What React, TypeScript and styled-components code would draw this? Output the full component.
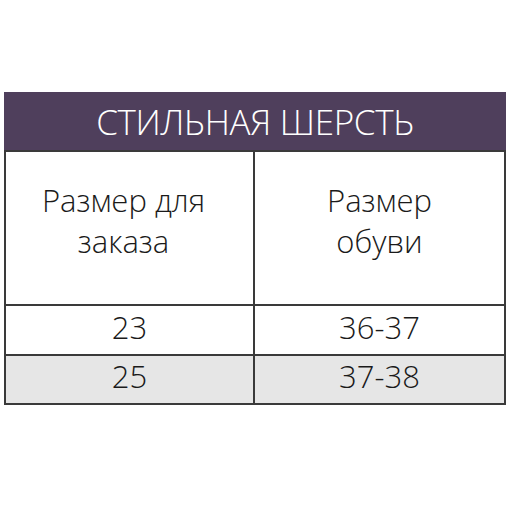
import React from "react";
import styled, { createGlobalStyle } from "styled-components";

const Global = createGlobalStyle`
  html, body {
    margin: 0;
    padding: 0;
    background: #ffffff;
  }
  body {
    font-family: "Open Sans", "Liberation Sans", sans-serif;
    color: #1a1a1a;
  }
`;

const Page = styled.div`
  width: 512px;
  height: 512px;
  padding: 92px 6px 0 4px;
  box-sizing: border-box;
`;

const Title = styled.div`
  height: 58px;
  background: #4f3f5c;
  color: #ffffff;
  display: flex;
  align-items: center;
  justify-content: center;
  font-size: 35px;
  font-weight: 300;
  letter-spacing: -0.3px;
`;

const Grid = styled.div`
  display: grid;
  grid-template-columns: 1fr 1fr;
  border: 2px solid #3a3a3a;
`;

const Cell = styled.div<{ $h: number; $shade?: boolean; $last?: boolean; $right?: boolean }>`
  height: ${(p) => p.$h}px;
  background: ${(p) => (p.$shade ? "#e6e6e6" : "#ffffff")};
  border-bottom: ${(p) => (p.$last ? "none" : "2px solid #3a3a3a")};
  border-right: ${(p) => (p.$right ? "none" : "2px solid #3a3a3a")};
  display: flex;
  align-items: center;
  justify-content: center;
  text-align: center;
  font-size: 31px;
  font-weight: 300;
  line-height: 38px;
`;

const CellText = styled.span<{ $dx?: number; $dy?: number }>`
  display: block;
  line-height: 41px;
  transform: translate(${(p) => p.$dx ?? 0}px, ${(p) => p.$dy ?? 0}px);
`;

export default function App() {
  return (
    <>
      <Global />
      <Page>
        <Title>СТИЛЬНАЯ ШЕРСТЬ</Title>
        <Grid>
          <Cell $h={152}>
            <CellText $dx={-6} $dy={-7}>
              Размер для
              <br />
              заказа
            </CellText>
          </Cell>
          <Cell $h={152} $right>
            <CellText $dy={-7}>
              Размер
              <br />
              обуви
            </CellText>
          </Cell>
          <Cell $h={48}>
            <CellText $dy={-3}>23</CellText>
          </Cell>
          <Cell $h={48} $right>
            <CellText $dy={-3}>36-37</CellText>
          </Cell>
          <Cell $h={47} $shade $last>
            <CellText $dy={-3}>25</CellText>
          </Cell>
          <Cell $h={47} $shade $last $right>
            <CellText $dy={-3}>37-38</CellText>
          </Cell>
        </Grid>
      </Page>
    </>
  );
}
